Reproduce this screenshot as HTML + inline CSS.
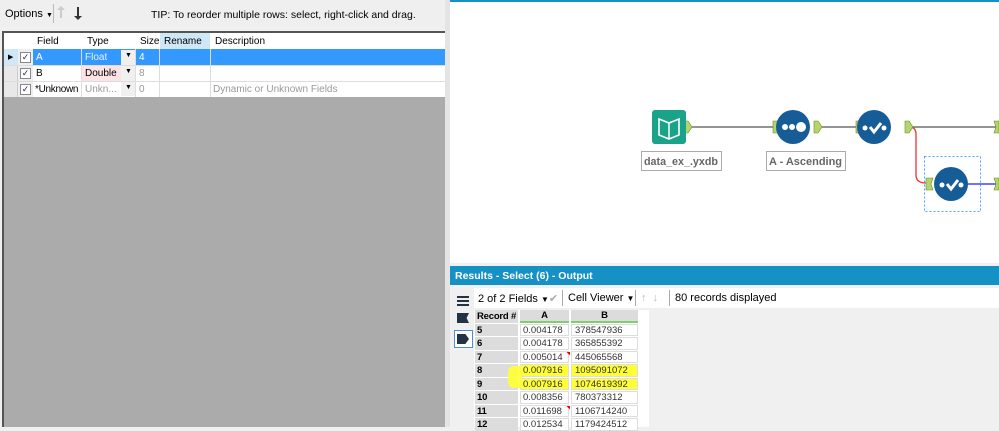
<!DOCTYPE html>
<html><head><meta charset="utf-8"><style>
*{margin:0;padding:0;box-sizing:border-box}
body{width:999px;height:427px;overflow:hidden;background:#f0f0f0;font-family:"Liberation Sans",sans-serif;font-size:10px;position:relative;color:#000}
.a{position:absolute}
.cell{position:absolute;white-space:nowrap;overflow:hidden}
</style></head><body>
<div class="a" style="left:0;top:0;width:446px;height:27px;background:#efefef"></div>
<div class="a" style="left:5px;top:8px;font-size:11px">Options <span style="font-size:7px">▼</span></div>
<div class="a" style="left:53px;top:4px;width:1px;height:19px;background:#bbb"></div>
<div class="a" style="left:60px;top:7px;width:2px;height:11px;background:#ccc"></div>
<div class="a" style="left:57px;top:6px;width:0;height:0;border:4px solid transparent;border-bottom:4px solid #ccc;border-top:0"></div>
<div class="a" style="left:77px;top:7px;width:2px;height:10px;background:#333"></div>
<div class="a" style="left:74px;top:16px;width:0;height:0;border:4px solid transparent;border-top:4px solid #333;border-bottom:0"></div>
<div class="a" style="left:151px;top:9px;font-size:10.5px">TIP: To reorder multiple rows: select, right-click and drag.</div>
<div class="a" style="left:2px;top:31px;width:443px;height:396px;background:#ababab;border-left:2px solid #555;border-top:2px solid #555"></div>
<div class="a" style="left:4px;top:33px;width:441px;height:16px;background:#fff"></div>
<div class="a" style="left:160px;top:33px;width:50px;height:16px;background:#cfe8f8"></div>
<div class="cell" style="left:37px;top:36px">Field</div>
<div class="cell" style="left:87px;top:36px">Type</div>
<div class="cell" style="left:140px;top:36px;width:19px">Size</div>
<div class="cell" style="left:164px;top:36px">Rename</div>
<div class="cell" style="left:215px;top:36px">Description</div>
<div class="a" style="left:4px;top:49px;width:441px;height:48px;background:#fff"></div>
<div class="a" style="left:33px;top:49px;width:412px;height:16px;background:#3399ff"></div>
<div class="a" style="left:4px;top:49px;width:14px;height:48px;background:#e8e8e8;border-right:1px solid #ccc"></div>
<div class="a" style="left:4px;top:49px;width:14px;height:16px;background:#cfe8f8"></div>
<div class="a" style="left:8px;top:53px;font-size:7px">▶</div>
<div class="a" style="left:18px;top:49px;width:15px;height:48px;background:#eee"></div>
<div class="a" style="left:20px;top:52px;width:11px;height:11px;border:1px solid #888;background:#fff;font-size:9px;line-height:9px;color:#225;text-align:center">✓</div>
<div class="a" style="left:20px;top:68px;width:11px;height:11px;border:1px solid #888;background:#fff;font-size:9px;line-height:9px;color:#225;text-align:center">✓</div>
<div class="a" style="left:20px;top:84px;width:11px;height:11px;border:1px solid #888;background:#fff;font-size:9px;line-height:9px;color:#225;text-align:center">✓</div>
<div class="a" style="left:81px;top:65px;width:40px;height:16px;background:#fde3e3"></div>
<div class="a" style="left:121px;top:50px;width:14px;height:46px;background:#f0f0f0"></div>
<div class="a" style="left:4px;top:65px;width:441px;height:1px;background:#ddd"></div>
<div class="a" style="left:4px;top:81px;width:441px;height:1px;background:#ddd"></div>
<div class="a" style="left:81px;top:49px;width:1px;height:48px;background:#ddd"></div>
<div class="a" style="left:135px;top:49px;width:1px;height:48px;background:#ddd"></div>
<div class="a" style="left:159px;top:49px;width:1px;height:48px;background:#ddd"></div>
<div class="a" style="left:210px;top:49px;width:1px;height:48px;background:#ddd"></div>
<div class="cell" style="left:36px;top:52px;color:#fff">A</div>
<div class="cell" style="left:85px;top:52px;color:#e6f0ff">Float</div>
<div class="cell" style="left:125px;top:52px;font-size:7px">▼</div>
<div class="cell" style="left:139px;top:52px;color:#fff">4</div>
<div class="cell" style="left:36px;top:68px">B</div>
<div class="cell" style="left:85px;top:68px;width:36px">Double</div>
<div class="cell" style="left:125px;top:68px;font-size:7px">▼</div>
<div class="cell" style="left:139px;top:68px;color:#999">8</div>
<div class="cell" style="left:35px;top:84px;width:46px;letter-spacing:-0.3px">*Unknown</div>
<div class="cell" style="left:85px;top:84px;color:#999;width:34px">Unkn...</div>
<div class="cell" style="left:125px;top:84px;font-size:7px">▼</div>
<div class="cell" style="left:139px;top:84px;color:#999">0</div>
<div class="cell" style="left:213px;top:84px;color:#999">Dynamic or Unknown Fields</div>
<div class="a" style="left:445px;top:0;width:5px;height:427px;background:#e4e4e4"></div>
<div class="a" style="left:450px;top:0;width:549px;height:263px;background:#fff;border-top:2px solid #1591c6"></div>
<svg class="a" style="left:450px;top:0" width="549" height="263">
<g stroke="#555" stroke-width="1.3" fill="none">
<line x1="242" y1="127" x2="330" y2="127"/>
<line x1="372" y1="127" x2="410" y2="127"/>
<line x1="462" y1="127" x2="549" y2="127"/>
</g>
<path d="M460 127 q5 0 6 6 L466 175 q0 8 10 8" stroke="#e33" stroke-width="1.3" fill="none"/>
<line x1="502" y1="184" x2="549" y2="184" stroke="#44f" stroke-width="1.5"/>
<g fill="#b5d46a" stroke="#6a8a2a" stroke-width="0.6">
<path d="M233 121 h5 l4 6 l-4 6 h-5z"/>
<path d="M323 121 h8 l-3 6 l3 6 h-8z"/>
<path d="M364 121 h4 l4 6 l-4 6 h-4z"/>
<path d="M406 121 h7 l-3 6 l3 6 h-7z"/>
<path d="M455 121 h4 l4 6 l-4 6 h-4z"/>
<path d="M544 121 h5 v12 h-5 l2 -6z"/>
<path d="M476 178 h7 l-2 6 l2 6 h-7z"/>
<path d="M495 177 h5 l5 7 l-5 7 h-5z"/>
<path d="M544 178 h5 v12 h-5 l2 -6z"/>
</g>
<rect x="202" y="110" width="34" height="34" rx="3" fill="#1aa389"/>
<path d="M209 119 l10 4 l10 -4 v16 l-10 4 l-10 -4z" fill="none" stroke="#fff" stroke-width="1.6"/>
<line x1="219" y1="123" x2="219" y2="138" stroke="#fff" stroke-width="1.5"/>
<circle cx="343" cy="127" r="17" fill="#165c96"/>
<circle cx="335" cy="127" r="3" fill="#fff"/><circle cx="342" cy="127" r="3" fill="#fff"/><circle cx="351" cy="127" r="5" fill="#fff"/>
<circle cx="424" cy="127" r="17" fill="#165c96"/>
<circle cx="415" cy="128" r="2.5" fill="#fff"/><circle cx="434" cy="128" r="2.5" fill="#fff"/>
<path d="M420 127 l4 5 l7 -9" stroke="#fff" stroke-width="3" fill="none"/>
<rect x="474.5" y="156.5" width="56" height="55" fill="none" stroke="#4aa3ff" stroke-dasharray="2,2"/>
<circle cx="501" cy="184" r="17" fill="#165c96"/>
<circle cx="492" cy="185" r="2.5" fill="#fff"/><circle cx="511" cy="185" r="2.5" fill="#fff"/>
<path d="M497 184 l4 5 l7 -9" stroke="#fff" stroke-width="3" fill="none"/>
<rect x="191.5" y="151.5" width="80" height="19" fill="#fff" stroke="#aaa"/>
<text x="194" y="165" font-family="Liberation Sans" font-weight="bold" font-size="11" fill="#666" textLength="74" lengthAdjust="spacingAndGlyphs">data_ex_.yxdb</text>
<rect x="316.5" y="151.5" width="79" height="19" fill="#fff" stroke="#aaa"/>
<text x="319" y="165" font-family="Liberation Sans" font-weight="bold" font-size="11" fill="#666" textLength="73" lengthAdjust="spacingAndGlyphs">A - Ascending</text>
</svg>
<div class="a" style="left:450px;top:266px;width:549px;height:19px;background:#1591c6;color:#fff;font-weight:bold;font-size:10.5px;padding:4px 5px">Results - Select (6) - Output</div>
<div class="a" style="left:450px;top:285px;width:549px;height:142px;background:#f0f0f0"></div>
<div class="a" style="left:474px;top:288px;width:525px;height:20px;background:#fff"></div>
<div class="a" style="left:478px;top:292px;font-size:11px">2 of 2 Fields <span style="font-size:8px">▼</span><span style="color:#aaa">✔</span></div>
<div class="a" style="left:562px;top:290px;width:1px;height:16px;background:#aaa"></div>
<div class="a" style="left:568px;top:292px;font-size:11px">Cell Viewer <span style="font-size:8px">▼</span></div>
<div class="a" style="left:635px;top:290px;width:1px;height:16px;background:#aaa"></div>
<div class="a" style="left:641px;top:292px;color:#bbb;font-size:11px">↑ &nbsp;↓</div>
<div class="a" style="left:669px;top:290px;width:1px;height:16px;background:#aaa"></div>
<div class="a" style="left:675px;top:292px;font-size:11px">80 records displayed</div>
<div class="a" style="left:457px;top:296px;width:12px;height:10px;background:repeating-linear-gradient(#234 0 2px,transparent 2px 4px)"></div>
<div class="a" style="left:457px;top:313px;width:12px;height:10px;background:#234;clip-path:polygon(0 0,100% 0,80% 50%,100% 100%,0 100%)"></div>
<div class="a" style="left:454px;top:330px;width:19px;height:18px;border:1px solid #4a90d9;background:#fff"></div>
<div class="a" style="left:457px;top:334px;width:12px;height:10px;background:#234;clip-path:polygon(0 0,70% 0,100% 50%,70% 100%,0 100%)"></div>
<div class="a" style="left:474px;top:310px;width:175px;height:117px;background:#fff"></div>
<div id="g"></div>
<script>
var rows=[["Record #","A","B"],["5","0.004178","378547936"],["6","0.004178","365855392"],["7","0.005014","445065568"],["8","0.007916","1095091072"],["9","0.007916","1074619392"],["10","0.008356","780373312"],["11","0.011698","1106714240"],["12","0.012534","1179424512"]];
var h="";
for(var i=0;i<rows.length;i++){var y=310+i*13.5;
 h+='<div class="cell" style="left:475px;top:'+y+'px;width:43px;height:12.5px;background:#dcdcdc;font-weight:bold;padding:1px 2px;font-size:9.5px;letter-spacing:-0.2px">'+rows[i][0]+'</div>';
 var hl=(i==4||i==5);
 if(i==0){h+='<div class="cell" style="left:520px;top:'+y+'px;width:49px;height:12.5px;background:#dcdcdc;border-bottom:2px solid #7fd06a;text-align:center;font-weight:bold;font-size:9.5px">A</div><div class="cell" style="left:571px;top:'+y+'px;width:67px;height:12.5px;background:#dcdcdc;border-bottom:2px solid #7fd06a;text-align:center;font-weight:bold;font-size:9.5px">B</div>';}
 else{var bg=hl?'#ffff33':'#fff';h+='<div class="cell" style="left:520px;top:'+y+'px;width:49px;height:12.5px;background:'+bg+';border:1px solid #ddd;padding:0 2px;font-size:9.5px;color:#333">'+rows[i][1]+'</div><div class="cell" style="left:571px;top:'+y+'px;width:67px;height:12.5px;background:'+bg+';border:1px solid #ddd;padding:0 3px;font-size:9.5px;color:#333">'+rows[i][2]+'</div>';}
 if(i==3||i==7)h+='<div class="a" style="left:566px;top:'+(y+1)+'px;width:4px;height:4px;background:#e00;clip-path:polygon(0 0,100% 0,100% 100%)"></div>';
}
h+='<div class="a" style="left:508px;top:366px;width:14px;height:22px;background:#ffff33;opacity:.9;border-radius:6px 0 0 6px"></div>';
document.getElementById("g").innerHTML=h;
</script>
</body></html>
